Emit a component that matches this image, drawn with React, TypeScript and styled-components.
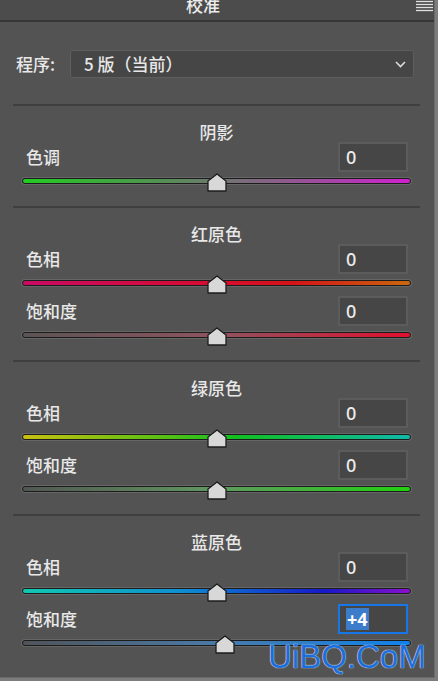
import React from "react";
import styled, { createGlobalStyle } from "styled-components";

const GlobalStyle = createGlobalStyle`
  html, body { margin: 0; padding: 0; background: #7c7c7c; }
  body { font-family: "Noto Sans CJK SC", "Noto Sans", sans-serif; }
  * { box-sizing: border-box; }
`;

const Panel = styled.div`
  position: relative;
  width: 435px;
  height: 678px;
  background: #535353;
  border-right: 1px solid #6a6a6a;
  border-bottom: 1px solid #6a6a6a;
  overflow: hidden;
  color: #e8e8e8;
  font-weight: 500;
`;

const Header = styled.div`
  height: 22px;
  background: #4c4c4c;
  border-bottom: 2px solid #363636;
  display: flex;
  align-items: flex-start;
  justify-content: center;
  padding-right: 28px;
  position: relative;
  overflow: hidden;
`;

const HeaderTitle = styled.div`
  font-size: 17px;
  line-height: 17px;
  margin-top: -4px;
  color: #ececec;
`;

const MenuIcon = styled.svg`
  position: absolute;
  right: 1px;
  top: 0;
`;

const ProgramRow = styled.div`
  display: flex;
  align-items: center;
  padding: 28px 20px 0 16px;
`;

const ProgramLabel = styled.div`
  width: 54px;
  font-size: 17px;
  line-height: 20px;
`;

const Select = styled.div`
  flex: 1;
  height: 28px;
  display: flex;
  align-items: center;
  justify-content: space-between;
  background: #464646;
  border: 1px solid #5e5e5e;
  border-radius: 3px;
  padding: 0 7px 0 13px;
  font-size: 17px;
`;

const SelectText = styled.span`
  line-height: 20px;
`;

const SectionList = styled.div`
  margin-top: 26px;
  padding: 0 14px 0 13px;
`;

const Section = styled.div`
  border-top: 2px solid #3f3f3f;
  padding: 15px 9px 12px;
`;

const SectionTitle = styled.div`
  height: 21px;
  line-height: 21px;
  font-size: 17px;
  text-align: center;
`;

const SliderRow = styled.div`
  display: flex;
  flex-direction: column;
`;

const ValueLine = styled.div`
  height: 30px;
  display: flex;
  align-items: center;
  justify-content: space-between;
`;

const ParamLabel = styled.span`
  margin-left: 4px;
  font-size: 17px;
  line-height: 20px;
`;

const ValueBox = styled.div<{ $active?: boolean }>`
  width: 70px;
  height: 30px;
  margin-right: 3px;
  background: #464646;
  border: 2px solid ${(p) => (p.$active ? "#1677e8" : "#5c5c5c")};
  display: flex;
  align-items: center;
  padding-left: 6px;
  font-family: "Noto Sans", "Liberation Sans", sans-serif;
  font-size: 18px;
  font-weight: ${(p) => (p.$active ? 700 : 500)};
  color: #ececec;
`;

const Highlight = styled.span`
  background: #3d7bcb;
  color: #ffffff;
  padding: 0 1px;
  line-height: 22px;
`;

const TrackArea = styled.div`
  position: relative;
  height: 22px;
`;

const Track = styled.div<{ $gradient: string }>`
  position: absolute;
  left: 0;
  right: 0;
  top: 6px;
  height: 6px;
  border: 1px solid #1c1c1c;
  border-radius: 3px;
  background: ${(p) => p.$gradient};
  box-shadow: 0 0 0 1px #666666;
`;

const Thumb = styled.svg`
  position: absolute;
  top: 1px;
  width: 20px;
  height: 19px;
`;

const Watermark = styled.div`
  position: absolute;
  left: 268px;
  top: 640px;
  font-family: "Liberation Sans", Arial, sans-serif;
  font-weight: 400;
  font-size: 33px;
  line-height: 33px;
  color: #1a6fdc;
  text-shadow: 0 0 1px #e8eefa, 0 0 1px #e8eefa;
  white-space: nowrap;
`;

type Slider = { label: string; value: number; gradient: string; active?: boolean };
type SectionData = { title: string; sliders: Slider[] };

const sections: SectionData[] = [
  {
    title: "阴影",
    sliders: [
      {
        label: "色调",
        value: 0,
        gradient: "linear-gradient(90deg, #22cc22 0%, #4a9a4a 30%, #6e786e 50%, #886088 65%, #d020d0 100%)",
      },
    ],
  },
  {
    title: "红原色",
    sliders: [
      {
        label: "色相",
        value: 0,
        gradient: "linear-gradient(90deg, #c80c64 0%, #d80c30 50%, #d41418 70%, #c8680e 100%)",
      },
      {
        label: "饱和度",
        value: 0,
        gradient: "linear-gradient(90deg, #5a5454 0%, #8e5460 50%, #e0102e 100%)",
      },
    ],
  },
  {
    title: "绿原色",
    sliders: [
      {
        label: "色相",
        value: 0,
        gradient: "linear-gradient(90deg, #c8c010 0%, #5cc014 35%, #10c020 55%, #10b8a8 100%)",
      },
      {
        label: "饱和度",
        value: 0,
        gradient: "linear-gradient(90deg, #525652 0%, #609860 50%, #22d010 100%)",
      },
    ],
  },
  {
    title: "蓝原色",
    sliders: [
      {
        label: "色相",
        value: 0,
        gradient: "linear-gradient(90deg, #10c8b0 0%, #1090d0 40%, #1060d0 55%, #1818c8 78%, #8a10cc 100%)",
      },
      {
        label: "饱和度",
        value: 4,
        active: true,
        gradient: "linear-gradient(90deg, #505458 0%, #4a7aa8 50%, #1082ea 100%)",
      },
    ],
  },
];

const TRACK_WIDTH = 390;

function SliderControl({ s }: { s: Slider }) {
  const center = (TRACK_WIDTH * (s.value + 100)) / 200;
  const text = s.value > 0 ? `+${s.value}` : `${s.value}`;
  return (
    <SliderRow>
      <ValueLine>
        <ParamLabel>{s.label}</ParamLabel>
        <ValueBox $active={s.active}>{s.active ? <Highlight>{text}</Highlight> : text}</ValueBox>
      </ValueLine>
      <TrackArea>
        <Track $gradient={s.gradient} />
        <Thumb viewBox="0 0 20 19" style={{ left: center - 10 }}>
          <path d="M10 1 L19 8 L19 18 L1 18 L1 8 Z" fill="#d8d8d8" stroke="#1c1c1c" strokeWidth="1.3" strokeLinejoin="round" />
        </Thumb>
      </TrackArea>
    </SliderRow>
  );
}

export default function App() {
  return (
    <>
      <GlobalStyle />
      <Panel>
        <Header>
          <HeaderTitle>校准</HeaderTitle>
          <MenuIcon width="17" height="12" viewBox="0 0 17 12">
            <g stroke="#e0e0e0" strokeWidth="1.3">
              <line x1="0" y1="1.5" x2="17" y2="1.5" />
              <line x1="0" y1="4.5" x2="17" y2="4.5" />
              <line x1="0" y1="7.5" x2="17" y2="7.5" />
              <line x1="0" y1="10.5" x2="17" y2="10.5" />
            </g>
          </MenuIcon>
        </Header>
        <ProgramRow>
          <ProgramLabel>程序:</ProgramLabel>
          <Select>
            <SelectText>5 版（当前）</SelectText>
            <svg width="11" height="7" viewBox="0 0 11 7">
              <polyline points="1,1 5.5,5.5 10,1" fill="none" stroke="#dcdcdc" strokeWidth="1.6" />
            </svg>
          </Select>
        </ProgramRow>
        <SectionList>
          {sections.map((sec) => (
            <Section key={sec.title}>
              <SectionTitle>{sec.title}</SectionTitle>
              {sec.sliders.map((s) => (
                <SliderControl key={s.label} s={s} />
              ))}
            </Section>
          ))}
        </SectionList>
        <Watermark>UiBQ.CoM</Watermark>
      </Panel>
    </>
  );
}
